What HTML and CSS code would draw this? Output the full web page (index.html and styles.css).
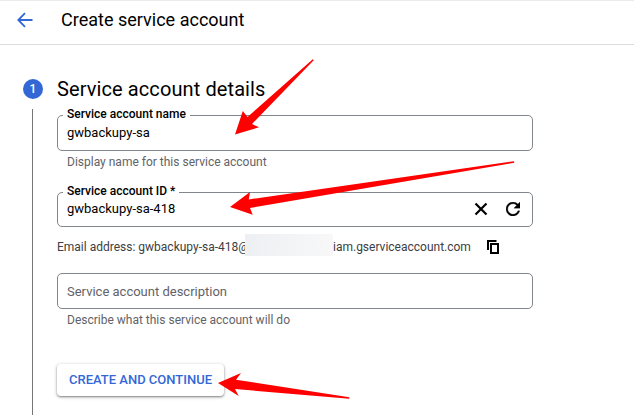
FILE: index.html
```html
<!DOCTYPE html>
<html lang="en">
<head>
<meta charset="utf-8">
<title>Create service account</title>
<link rel="stylesheet" href="styles.css">
</head>
<body>
<header class="header">
  <svg class="back" viewBox="0 0 16 16"><path d="M15.5 8H1.6M8 1.2L1.3 8L8 14.8"/></svg>
  <h1 class="title">Create service account</h1>
</header>
<main class="stepper">
  <div class="rail"><span class="step">1</span><span class="line"></span></div>
  <section class="content">
    <h2 class="heading">Service account details</h2>
    <div class="field name">
      <span class="label"><span class="label-name">Service account name</span></span>
      <span class="value value-name">gwbackupy-sa</span>
    </div>
    <p class="hint hint-name">Display name for this service account</p>
    <div class="field id">
      <span class="label"><span class="label-id">Service account ID *</span></span>
      <span class="value value-id">gwbackupy-sa-418</span>
      <svg class="clear" viewBox="0 0 14 14"><path d="M1.5 1.5L12.5 12.5M12.5 1.5L1.5 12.5"/></svg>
      <svg class="refresh" viewBox="4 4 16 16"><path d="M17.65 6.35C16.2 4.9 14.21 4 12 4c-4.42 0-7.99 3.58-7.99 8s3.57 8 7.99 8c3.73 0 6.84-2.55 7.73-6h-2.08c-.82 2.33-3.04 4-5.65 4-3.31 0-6-2.69-6-6s2.69-6 6-6c1.66 0 3.14.69 4.22 1.78L13 11h7V4l-2.35 2.35z"/></svg>
    </div>
    <div class="email">
      <span class="email-start">Email address: gwbackupy-sa-418@</span>
      <span class="redacted"></span>
      <span class="email-end">iam.gserviceaccount.com</span>
      <svg class="copy" viewBox="0 0 12 14"><path d="M1 10V1H9.5M4 4H11V13H4Z"/></svg>
    </div>
    <div class="field description"><span class="value value-desc">Service account description</span></div>
    <p class="hint hint-desc">Describe what this service account will do</p>
    <button class="submit"><span>CREATE AND CONTINUE</span></button>
  </section>
</main>
<svg class="arrows" viewBox="0 0 634 415">
  <path d="M235 134.5L242.8 111L247.5 117L312.8 59.3L313.7 60.2L252 124L259 127.3Z"/>
  <path d="M230 207L250 192L248.8 199.4L514 161.2L514.3 162.7L250 208L252.7 214.8Z"/>
  <path d="M218 383L241 373L236 379.8L349.3 397.2V398.8L235 389L238.7 396Z"/>
</svg>
</body>
</html>
```
FILE: styles.css
```css
* { box-sizing: border-box; }
body { margin: 0; height: 415px; overflow: hidden; background: #fff; color: #000; font-family: Roboto, sans-serif; }
h1, h2, p { margin: 0; font-weight: 400; white-space: nowrap; }
svg { display: block; flex: none; }
.header { height: 45px; display: flex; align-items: center; padding: 0 0 6px 17px; border-top: 1px solid #ebebeb; border-bottom: 1px solid #dadce0; }
.back { width: 16px; height: 16px; fill: none; stroke: #3367d6; stroke-width: 1.8; }
.title { margin-left: 28px; font-size: 18px; line-height: 24px; letter-spacing: .01px; }
.stepper { display: flex; padding: 34px 0 0 23px; height: 370px; }
.rail { width: 20px; margin-right: 14px; display: flex; flex-direction: column; align-items: center; }
.step { width: 20px; height: 20px; border-radius: 50%; background: #3367d6; color: #fff; font-size: 12px; font-weight: 500; line-height: 20px; text-align: center; flex: none; }
.line { width: 1px; flex: 1; margin: 10px 1px 0 0; background: #757575; }
.content { width: 476px; }
.heading { font-size: 20px; line-height: 24px; height: 36px; margin-top: -2px; letter-spacing: .1px; }
.field { position: relative; height: 36px; border: 1px solid #80868b; border-radius: 5px; display: flex; align-items: center; padding: 0 12px 0 9px; }
.name { margin-top: 2px; }
.label { position: absolute; left: 5px; top: -9px; padding: 0 4px; background: #fff; font-size: 12px; font-weight: 500; line-height: 14px; white-space: nowrap; }
.value { flex: 1; font-size: 13px; line-height: 16px; white-space: nowrap; }
.hint { margin-left: 10px; font-size: 12px; line-height: 16px; color: #5f6368; }
.hint-name { margin-top: 3px; }
.id { margin-top: 22px; height: 35px; padding-bottom: 1px; }
.value-id { padding-bottom: 1px; }
.clear { width: 14px; height: 14px; fill: none; stroke: #000; stroke-width: 2.2; margin-right: 18px; }
.refresh { width: 14px; height: 14px; fill: #000; stroke: #000; stroke-width: .3; }
.email { height: 46px; display: flex; align-items: center; padding-bottom: 6px; font-size: 12px; white-space: nowrap; color: #3c4043; }
.email-start { width: 188px; }
.redacted { position: relative; width: 88px; height: 22px; margin-top: -4px; background: linear-gradient(90deg, #edf0f3, #f3f4f6 55%, #f8f8f8); }
.copy { width: 12px; height: 14px; margin-left: 16px; fill: none; stroke: #000; stroke-width: 2; }
.description { padding-top: 2px; }
.value-desc { color: #5f6368; }
.hint-desc { margin-top: 3px; }
.submit { display: block; margin: 36px 0 0; width: 167px; height: 32px; padding: 0 0 1px; border: 0; border-radius: 4px; background: #fff; color: #3367d6; font: 500 13px/16px Roboto, sans-serif; box-shadow: 0 1px 2px rgba(0,0,0,.4), 0 1px 4px rgba(0,0,0,.18); white-space: nowrap; }
.arrows { position: absolute; left: 0; top: 0; width: 634px; height: 415px; fill: #f00; pointer-events: none; }
```
